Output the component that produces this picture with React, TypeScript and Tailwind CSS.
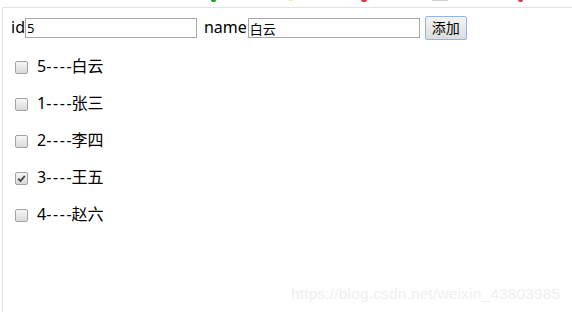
import React from "react";

const items = [
  { id: 5, name: "白云", checked: false },
  { id: 1, name: "张三", checked: false },
  { id: 2, name: "李四", checked: false },
  { id: 3, name: "王五", checked: true },
  { id: 4, name: "赵六", checked: false },
];

const font = '"Noto Sans", "Noto Sans CJK SC", sans-serif';

function Check({ checked }: { checked: boolean }) {
  return (
    <span className="flex items-center justify-center w-[13px] h-[13px] rounded-[2px] border border-[#a3a3a3] bg-gradient-to-b from-[#f7f7f7] to-[#d9d9d9]">
      {checked && (
        <svg width="9" height="9" viewBox="0 0 9 9">
          <path d="M1.2 4.6 L3.5 7 L7.8 1.8" fill="none" stroke="#4a4a4a" strokeWidth="1.9" />
        </svg>
      )}
    </span>
  );
}

export default function App() {
  return (
    <div className="w-[572px] h-[312px] bg-white overflow-hidden text-black" style={{ fontFamily: font }}>
      {/* top strip with clipped marks of the page above */}
      <div className="flex items-start h-[7px] pl-[211px]">
        <span className="w-[5px] h-[2px] bg-[#1a9a2a] rounded-b-full" />
        <span className="ml-[73px] w-[4px] h-[1px] bg-[#f3e9b0]" />
        <span className="ml-[68px] w-[6px] h-[2px] bg-[#d04040] rounded-b-full" />
        <span className="ml-[65px] w-[16px] h-[1px] bg-[#cfcfcf]" />
        <span className="ml-[70px] w-[5px] h-[2px] bg-[#d04040] rounded-b-full" />
      </div>
      <div className="relative ml-[2px] h-[305px] border-t border-l border-[#e3e3e3] pl-[8px]">
        <div className="flex items-center h-[26px] mt-[7px] text-[16px] leading-none">
          <span className="relative top-[-1px]">id</span>
          <input
            readOnly
            value="5"
            className="w-[172px] h-[20px] border border-[#a9a9a9] px-[1px] text-[13px] outline-none"
            style={{ fontFamily: font }}
          />
          <span className="ml-[7px] relative top-[-1px]">name</span>
          <input
            readOnly
            value="白云"
            className="ml-[1px] w-[172px] h-[20px] border border-[#a9a9a9] px-[1px] text-[13px] outline-none"
            style={{ fontFamily: font }}
          />
          <button
            className="ml-[5px] w-[42px] h-[24px] border border-[#8cb5e8] rounded-[2px] bg-gradient-to-b from-[#f4f4f4] to-[#dcdcdc] text-[14px] leading-none"
            style={{ fontFamily: font }}
          >
            添加
          </button>
        </div>
        <div className="mt-[14px] flex flex-col gap-[13px] pl-[4px]">
          {items.map((it) => (
            <div key={it.id} className="flex items-center h-[24px] text-[16px]">
              <Check checked={it.checked} />
              <span className="ml-[9px] relative top-[-1px]">
                {it.id}
                <span className="tracking-[1.6px] mr-[-1.6px]">----</span>
                {it.name}
              </span>
            </div>
          ))}
        </div>
        <div
          className="absolute left-[288px] top-[274px] text-[15.4px] text-[#efefef] tracking-[0.2px]"
          style={{ fontFamily: '"Liberation Sans", Arial, sans-serif' }}
        >
          https://blog.csdn.net/weixin_43803985
        </div>
      </div>
    </div>
  );
}
